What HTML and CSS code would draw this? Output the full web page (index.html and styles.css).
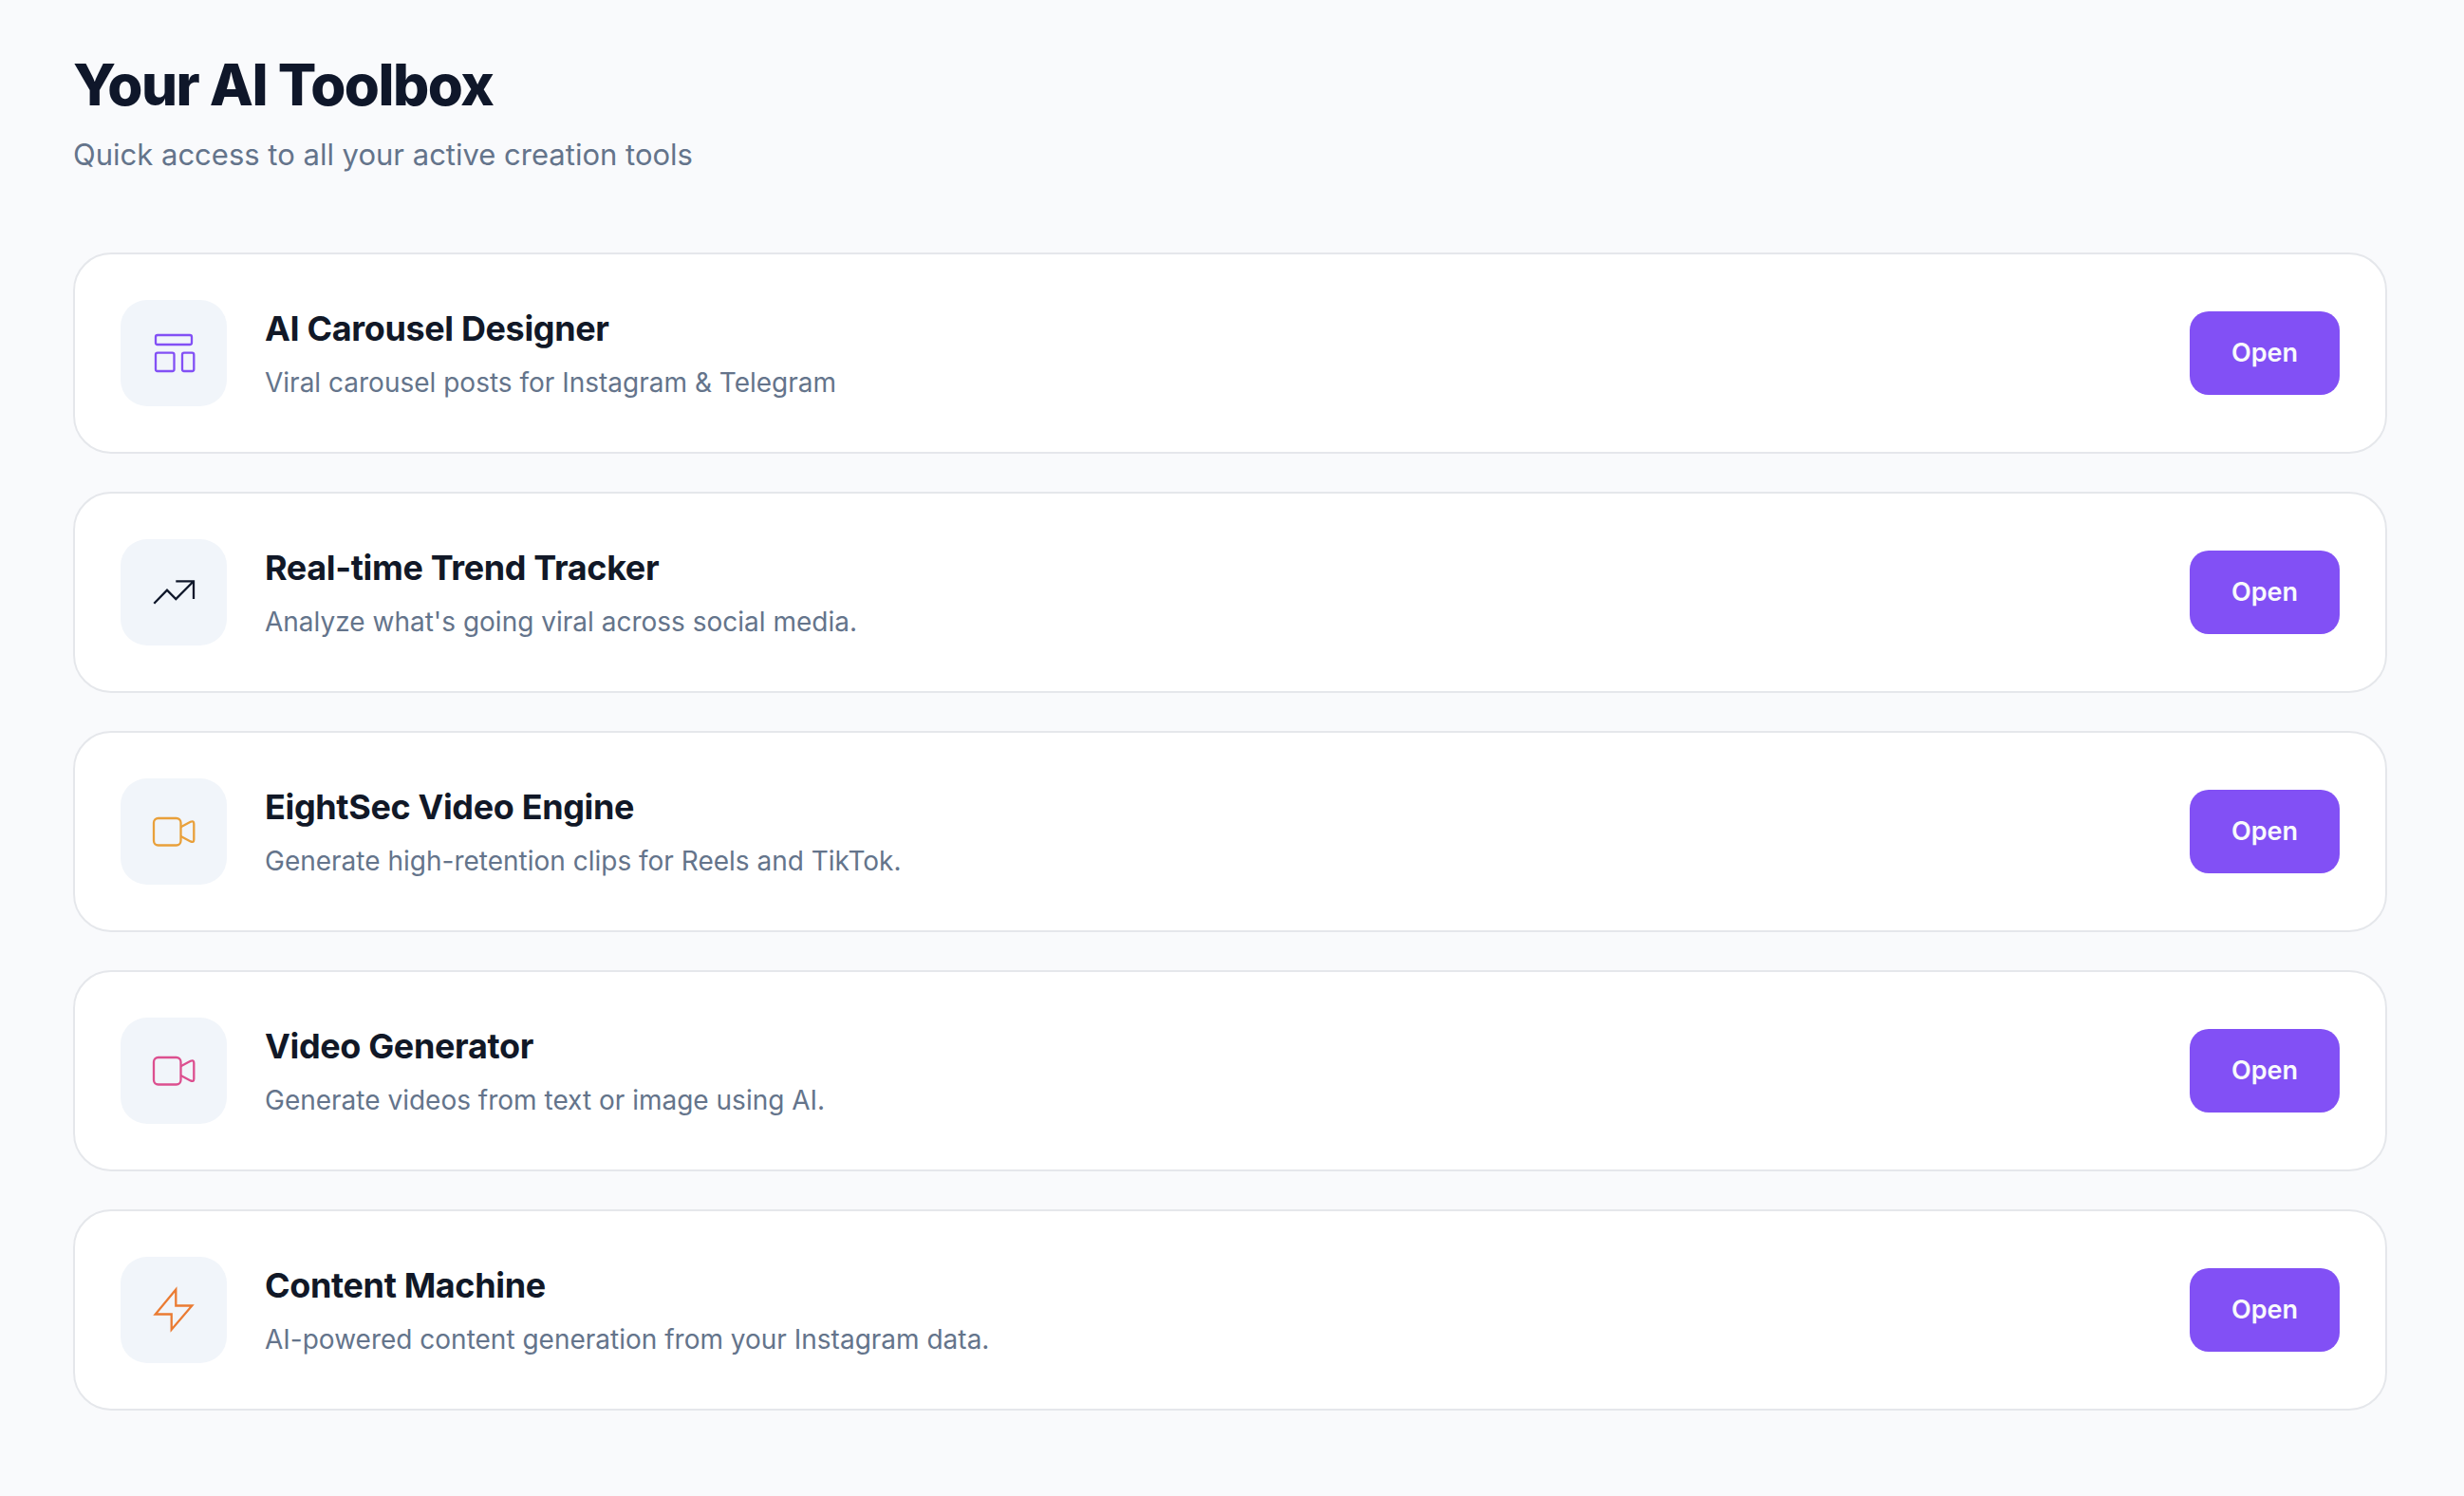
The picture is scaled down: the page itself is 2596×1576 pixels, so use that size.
FILE: index.html
```html
<!DOCTYPE html>
<html lang="en">
<head>
<meta charset="utf-8">
<meta name="viewport" content="width=device-width, initial-scale=1">
<title>Your AI Toolbox</title>
<link rel="stylesheet" href="styles.css">
</head>
<body>
<main class="page">
  <header class="page-header">
    <h1 class="page-title">Your AI Toolbox</h1>
    <p class="page-subtitle">Quick access to all your active creation tools</p>
  </header>
  <ul class="tools">
    <li class="tool">
      <span class="tool-icon violet">
        <svg viewBox="0 0 56 56" aria-hidden="true"><rect x="9" y="9" width="38" height="10" rx="2"/><rect x="9" y="27.7" width="19.5" height="19.3" rx="2"/><rect x="37" y="27.7" width="12.3" height="19.3" rx="2"/></svg>
      </span>
      <div class="tool-text">
        <h2 class="tool-name">AI Carousel Designer</h2>
        <p class="tool-desc">Viral carousel posts for Instagram &amp; Telegram</p>
      </div>
      <button class="open-button" type="button">Open</button>
    </li>
    <li class="tool">
      <span class="tool-icon ink">
        <svg viewBox="0 0 56 56" aria-hidden="true"><path d="M7.3 39.7 21 25.7l9.3 9.3L49 16.3M30.3 16.3H49V35"/></svg>
      </span>
      <div class="tool-text">
        <h2 class="tool-name">Real-time Trend Tracker</h2>
        <p class="tool-desc">Analyze what's going viral across social media.</p>
      </div>
      <button class="open-button" type="button">Open</button>
    </li>
    <li class="tool">
      <span class="tool-icon amber">
        <svg viewBox="0 0 56 56" aria-hidden="true"><rect x="7" y="14" width="28.5" height="28.5" rx="4.7"/><path d="m35.5 23.3 10.2-5.5q3.6-1.6 3.6 2v16.6q0 3.6-3.6 2l-10.2-5.5"/></svg>
      </span>
      <div class="tool-text">
        <h2 class="tool-name">EightSec Video Engine</h2>
        <p class="tool-desc">Generate high-retention clips for Reels and TikTok.</p>
      </div>
      <button class="open-button" type="button">Open</button>
    </li>
    <li class="tool">
      <span class="tool-icon pink">
        <svg viewBox="0 0 56 56" aria-hidden="true"><rect x="7" y="14" width="28.5" height="28.5" rx="4.7"/><path d="m35.5 23.3 10.2-5.5q3.6-1.6 3.6 2v16.6q0 3.6-3.6 2l-10.2-5.5"/></svg>
      </span>
      <div class="tool-text">
        <h2 class="tool-name">Video Generator</h2>
        <p class="tool-desc">Generate videos from text or image using AI.</p>
      </div>
      <button class="open-button" type="button">Open</button>
    </li>
    <li class="tool">
      <span class="tool-icon orange">
        <svg viewBox="0 0 56 56" aria-hidden="true"><path d="M30.3 6.5v17h17L25.7 48.7V32.5h-17z"/></svg>
      </span>
      <div class="tool-text">
        <h2 class="tool-name">Content Machine</h2>
        <p class="tool-desc">AI-powered content generation from your Instagram data.</p>
      </div>
      <button class="open-button" type="button">Open</button>
    </li>
  </ul>
</main>
</body>
</html>
```
FILE: styles.css
```css
* {
  box-sizing: border-box;
}

body {
  margin: 0;
  background: #f9fafc;
  color: #0f172a;
  font-family: Inter, "Liberation Sans", sans-serif;
}

.page {
  padding: 53px 81px 64px 77px;
}

.page-header {
  margin-bottom: 81px;
}

.page-title {
  margin: 0 0 16px;
  font-size: 60px;
  font-weight: 800;
  line-height: 72px;
  letter-spacing: -0.025em;
}

.page-subtitle {
  margin: 0;
  color: #64748b;
  font-size: 31px;
  line-height: 44px;
}

.tools {
  display: flex;
  flex-direction: column;
  gap: 40px;
  margin: 0;
  padding: 0;
  list-style: none;
}

.tool {
  display: flex;
  align-items: center;
  gap: 40px;
  padding: 48px;
  border: 2px solid #e5e7eb;
  border-radius: 40px;
  background: #fff;
}

.tool-icon {
  display: grid;
  flex: none;
  place-items: center;
  width: 112px;
  height: 112px;
  border-radius: 28px;
  background: #f1f5fa;
}

.tool-icon svg {
  width: 56px;
  height: 56px;
  fill: none;
  stroke: currentColor;
  stroke-width: 2.3;
}

.violet { color: #8250f5; }
.ink { color: #0f172a; }
.amber { color: #e9a03a; }
.pink { color: #dc4f8f; }
.orange { color: #ea7b32; }

.tool-text {
  flex: 1;
  min-width: 0;
  padding-top: 4px;
}

.tool-name {
  margin: 0 0 12px;
  color: #111827;
  font-size: 36px;
  font-weight: 700;
  line-height: 46px;
  letter-spacing: -0.01em;
}

.tool-desc {
  margin: 0;
  color: #64748b;
  font-size: 28px;
  line-height: 44px;
}

.open-button {
  flex: none;
  padding: 28px 44px;
  border: 0;
  border-radius: 20px;
  background: #8250f5;
  color: #f8fafc;
  font: 600 27px/32px Inter, "Liberation Sans", sans-serif;
}
```
